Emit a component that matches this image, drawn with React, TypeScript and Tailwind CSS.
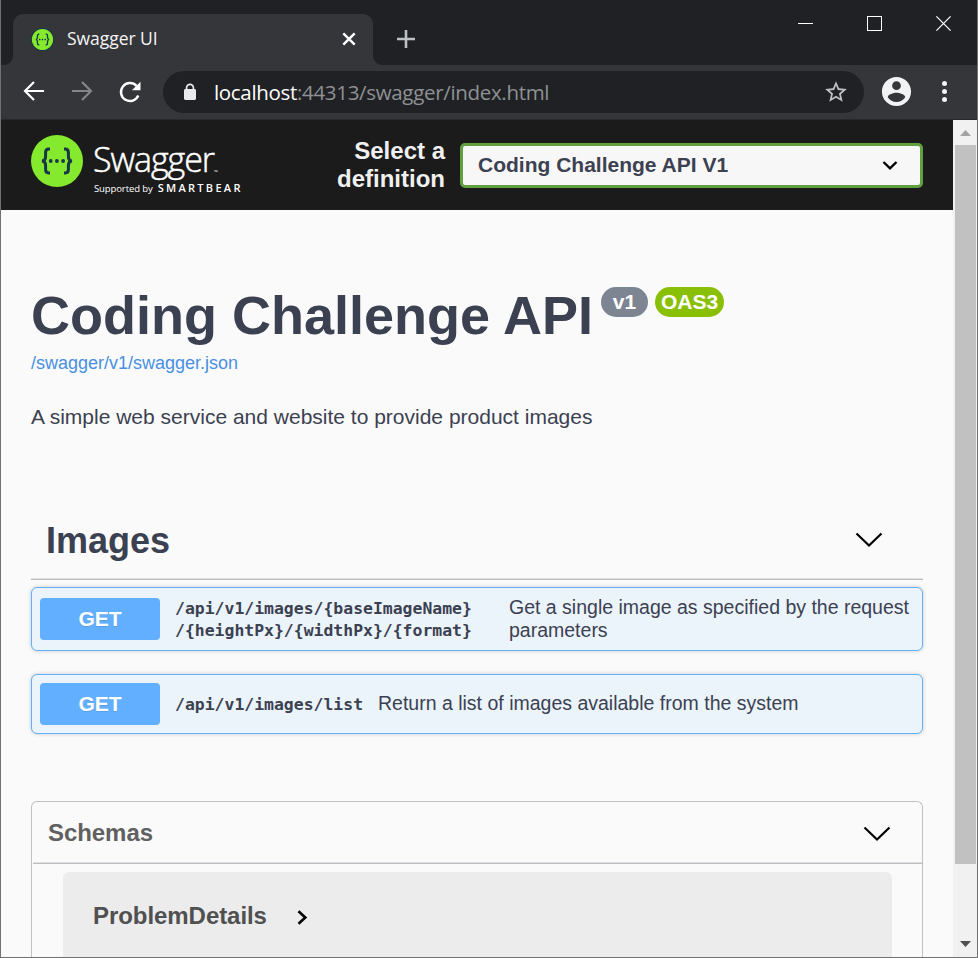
import React from "react";

const ui = "font-['Open_Sans','Noto_Sans',sans-serif]";
const sans = "font-['Liberation_Sans',Arial,sans-serif]";

function SwaggerMark({ className, dark }: { className: string; dark?: boolean }) {
  return (
    <svg className={className} viewBox="0 0 52 52" fill="none">
      <circle cx="26" cy="26" r="26" fill={dark ? "#173647" : "#85ea2d"} />
      {dark && <circle cx="26" cy="26" r="24" fill="#85ea2d" />}
      <path
        d="M19 14h-1.200c-2.400 0-3.200 1.300-3.200 3.400v4.200c0 2.500-.9 4.200-3.600 4.400 2.700.2 3.600 1.900 3.600 4.400v4.200c0 2.100.8 3.400 3.200 3.400H19M33 14h1.200c2.400 0 3.200 1.300 3.200 3.400v4.200c0 2.500.9 4.200 3.600 4.400-2.700.2-3.600 1.900-3.600 4.400v4.200c0 2.100-.8 3.400-3.200 3.400H33"
        stroke="#173647"
        strokeWidth="3"
      />
      <g fill="#173647">
        <circle cx="19.700" cy="26" r="1.900" />
        <circle cx="25.900" cy="26" r="1.900" />
        <circle cx="32.100" cy="26" r="1.900" />
      </g>
    </svg>
  );
}

function Chevron() {
  return (
    <svg className="h-[16px] w-[28px]" viewBox="0 0 28 16" fill="none">
      <path d="M1.500 1.500 14 13.500 26.500 1.500" stroke="#000" strokeWidth="2.200" />
    </svg>
  );
}

function TitleBar() {
  return (
    <div className="flex h-[65px] items-end bg-[#202124]">
      <div className="flex h-[51px] w-3 shrink-0 items-end bg-[#35363a]">
        <div className="h-full w-full rounded-br-[9px] bg-[#202124]" />
      </div>
      <div className="flex h-[51px] w-[360px] shrink-0 items-center rounded-t-[10px] bg-[#35363a] pb-px pl-[18px] pr-[17px]">
        <SwaggerMark className="h-[23px] w-[23px]" dark />
        <span className="mb-px ml-[13px] flex-1 text-[17.500px] tracking-[-0.05px] text-[#f4f4f5]">Swagger UI</span>
        <svg className="h-[14px] w-[14px]" viewBox="0 0 14 14" stroke="#fff" strokeWidth="2.400">
          <path d="m1.300 1.300 11.400 11.400m0-11.400L1.300 12.700" />
        </svg>
      </div>
      <div className="h-[51px] w-3 shrink-0 bg-[#35363a]">
        <div className="h-full w-full rounded-bl-[9px] bg-[#202124]" />
      </div>
      <svg className="mb-[17px] ml-[12px] h-[18px] w-[18px]" viewBox="0 0 18 18" stroke="#bdc1c6" strokeWidth="2.600">
        <path d="M9 0v18M0 9h18" />
      </svg>
      <div className="mb-[34px] ml-auto mr-[26px] flex items-center gap-[54px]">
        <div className="h-px w-[15px] bg-white" />
        <div className="h-[15px] w-[15px] border border-white" />
        <svg className="h-[15px] w-[15px]" viewBox="0 0 15 15" stroke="#fff" strokeWidth="1.200">
          <path d="m.4.4 14.200 14.200m0-14.200L.4 14.600" />
        </svg>
      </div>
    </div>
  );
}

function AddressBar() {
  return (
    <div className="flex h-[55px] items-center border-b border-[#29292c] bg-[#35363a] pl-[22px]">
      <svg className="mb-[2px] h-[22px] w-[22px]" viewBox="0 0 22 22" fill="none" stroke="#fff" strokeWidth="2.200">
        <path d="M21 11H2.500M11 2l-9 9 9 9" />
      </svg>
      <svg className="mb-[2px] ml-[26px] h-[22px] w-[22px]" viewBox="0 0 22 22" fill="none" stroke="#85868a" strokeWidth="2.200">
        <path d="M1 11h18.500M11 2l9 9-9 9" />
      </svg>
      <svg className="mb-[1px] ml-[25px] h-[24px] w-[24px]" viewBox="0 0 24 24" fill="none">
        <path d="M20.300 15.500a9 9 0 1 1-1.800-9.700" stroke="#fff" strokeWidth="2.400" />
        <path d="M22.500 1.700v8.600h-8.600z" fill="#fff" />
      </svg>
      <div className="ml-[21px] flex h-[42px] w-[701px] items-center rounded-full bg-[#202124] pl-[21px] pr-[15px]">
        <svg className="h-[18px] w-[12px]" viewBox="0 0 12 18">
          <path d="M2.600 7V4.800a3.400 3.400 0 0 1 6.800 0V7" fill="none" stroke="#e8eaed" strokeWidth="1.700" />
          <rect y="6" width="12" height="11" rx="1.400" fill="#e8eaed" />
        </svg>
        <div className="ml-[18px] flex-1 whitespace-nowrap text-[20.500px] tracking-[-0.320px] text-[#8e9195]">
          <span className="text-white">localhost</span>:44313/swagger/index.html
        </div>
        <svg className="h-[26px] w-[26px]" viewBox="0 0 24 24" fill="#c0c1c3">
          <path d="m22 9.240-7.190-.620L12 2 9.190 8.630 2 9.240l5.460 4.730L5.820 21 12 17.270 18.180 21l-1.630-7.030L22 9.240zM12 15.400l-3.760 2.270 1-4.280-3.320-2.880 4.380-.380L12 6.100l1.710 4.040 4.380.380-3.320 2.880 1 4.280L12 15.400z" />
        </svg>
      </div>
      <svg className="mb-[2px] ml-[15px] h-[35px] w-[35px]" viewBox="0 0 24 24" fill="#f1f3f4">
        <path d="M12 2C6.480 2 2 6.480 2 12s4.480 10 10 10 10-4.480 10-10S17.520 2 12 2zm0 3a3 3 0 1 1 0 6 3 3 0 0 1 0-6zm0 14.200a7.200 7.200 0 0 1-6-3.220c.030-1.990 4-3.080 6-3.080 1.990 0 5.970 1.090 6 3.080a7.200 7.200 0 0 1-6 3.220z" />
      </svg>
      <div className="mb-[2px] ml-[28px] flex flex-col gap-[3px]">
        <i className="h-[5px] w-[5px] rounded-full bg-[#f1f3f4]" />
        <i className="h-[5px] w-[5px] rounded-full bg-[#f1f3f4]" />
        <i className="h-[5px] w-[5px] rounded-full bg-[#f1f3f4]" />
      </div>
    </div>
  );
}

function TopBar() {
  return (
    <div className="flex h-[90px] bg-[#1b1b1b] px-[30px] text-white">
      <SwaggerMark className="mt-[15px] h-[52px] w-[52px] shrink-0" />
      <div className={`ml-[10px] w-[160px] shrink-0 pt-[19px] ${ui}`}>
        <div className="flex h-[40px] items-end leading-[40px]">
          <span className="text-[34px] font-light tracking-[-1.050px] [-webkit-text-stroke:0.5px_white]">Swagger</span>
          <span className="h-[27px] text-[5px] leading-[40px]">™</span>
        </div>
        <div className="flex h-[18px] items-center whitespace-nowrap leading-[16px]">
          <span className="ml-px mt-px text-[9.500px] tracking-[-0.100px]">Supported by</span>
          <span className="ml-[5px] text-[11px] font-semibold tracking-[2.300px]">SMARTBEAR</span>
        </div>
      </div>
      <div className="ml-auto w-[120px] pt-[17px] text-right text-[24px] font-bold leading-[28px] text-[#f0f0f0]">
        Select a definition
      </div>
      <div className="ml-[15px] mt-[23px] flex h-[45px] w-[463px] items-center justify-between rounded-[5px] border-[3px] border-[#62a03f] bg-[#f7f7f7] pl-[15px] pr-[22px]">
        <span className="mb-[2px] text-[21px] font-bold text-[#3b4151]">Coding Challenge API V1</span>
        <svg className="h-[9px] w-[16px]" viewBox="0 0 16 9" fill="none" stroke="#000" strokeWidth="2.400">
          <path d="m1.500 1 6.500 6.300L14.500 1" />
        </svg>
      </div>
    </div>
  );
}

function Info() {
  return (
    <div className="h-[286px] pt-[75px] text-[#3b4151]">
      <div className="flex h-[63px]">
        <h1 className="whitespace-nowrap text-[54px] font-bold leading-[60px]">Coding Challenge API</h1>
        <div className="ml-auto mr-[199px] mt-[2px] flex gap-[7px] text-[21px] font-bold leading-[30px] text-white">
          <span className="h-[30px] w-[47px] rounded-full bg-[#7d8492] text-center">v1</span>
          <span className="h-[30px] w-[69px] rounded-full bg-[#89bf04] text-center">OAS3</span>
        </div>
      </div>
      <div className="mt-[5px] h-[20px] text-[18px] leading-[20px] text-[#4990e2]">/swagger/v1/swagger.json</div>
      <p className="mt-[32px] text-[21px] leading-[24px]">A simple web service and website to provide product images</p>
    </div>
  );
}

function Operation({ height, path, summary, pathWidth }: { height: string; path: string[]; summary: string[]; pathWidth: string }) {
  return (
    <div className={`${height} flex items-center rounded-[6px] border border-[#61affe] bg-[#ebf3fb] pl-[8px] shadow-[0_0_4px_rgba(0,0,0,0.19)]`}>
      <div className="h-[42px] w-[120px] shrink-0 rounded-[4px] bg-[#61affe] text-center text-[21px] font-bold leading-[42px] text-white [text-shadow:0_1px_0_rgba(0,0,0,0.1)]">
        GET
      </div>
      <div className={`${pathWidth} ml-[15px] shrink-0 whitespace-nowrap pt-[2px] font-['DejaVu_Sans_Mono',monospace] text-[16.440px] font-bold leading-[22px]`}>
        {path.map((line) => (
          <div key={line}>{line}</div>
        ))}
      </div>
      <div className="mb-px whitespace-nowrap text-[19.500px] leading-[23px]">
        {summary.map((line) => (
          <div key={line}>{line}</div>
        ))}
      </div>
    </div>
  );
}

function Operations() {
  return (
    <section className="text-[#3b4151]">
      <div className="flex h-[84px] items-center justify-between border-b border-[#bdbec2] pb-px pl-[15px] pr-[40px] pt-[7px] shadow-[inset_0_-1px_0_#dedfe1]">
        <h2 className="text-[36px] font-bold">Images</h2>
        <div className="mb-px">
          <Chevron />
        </div>
      </div>
      <div className="mt-[7px] flex flex-col gap-[23px]">
        <Operation
          height="h-[64px]"
          path={["/api/v1/images/{baseImageName}", "/{heightPx}/{widthPx}/{format}"]}
          summary={["Get a single image as specified by the request", "parameters"]}
          pathWidth="w-[334px]"
        />
        <Operation
          height="h-[60px]"
          path={["/api/v1/images/list"]}
          summary={["Return a list of images available from the system"]}
          pathWidth="w-[203px]"
        />
      </div>
    </section>
  );
}

function Schemas() {
  return (
    <section className="mt-[67px] h-[170px] rounded-t-[6px] border border-b-0 border-[#bfc0c4]">
      <div className="ml-px flex h-[62px] items-center justify-between border-b border-[#bdbec2] pb-px pl-[15px] pr-[31px] pt-[3px] shadow-[inset_0_-1px_0_#dedfe1]">
        <h3 className="mb-[2px] text-[24px] font-bold tracking-[-0.060px] text-[#606060]">Schemas</h3>
        <Chevron />
      </div>
      <div className="ml-[31px] mr-[30px] mt-[8px] flex h-[87px] items-center rounded-t-[6px] bg-[#ececec] pl-[30px]">
        <span className="text-[24px] font-bold tracking-[-0.060px] text-[#505050]">ProblemDetails</span>
        <svg className="ml-[30px] mt-[4px] h-[15px] w-[11px]" viewBox="0 0 11 15" fill="none" stroke="#000" strokeWidth="2.600">
          <path d="m1.500 1.200 6.800 6.300-6.800 6.300" />
        </svg>
      </div>
    </section>
  );
}

function Scrollbar() {
  return (
    <div className="flex w-6 shrink-0 flex-col items-center bg-[#f1f1f1]">
      <svg className="mt-[10px] h-[6px] w-[11px]" viewBox="0 0 11 6">
        <path d="M0 6 5.500 0 11 6z" fill="#a3a3a3" />
      </svg>
      <div className="mt-[9px] h-[719px] w-[21px] bg-[#c1c1c1]" />
      <svg className="mb-[10px] mt-auto h-[6px] w-[11px]" viewBox="0 0 11 6">
        <path d="M0 0 5.500 6 11 0z" fill="#505050" />
      </svg>
    </div>
  );
}

export default function App() {
  return (
    <div className={`h-[958px] w-[978px] overflow-hidden border-x border-b border-[#717171] bg-[#fafafa] ${sans}`}>
      <header className={ui}>
        <TitleBar />
        <AddressBar />
      </header>
      <div className="flex h-[837px] overflow-hidden">
        <main className="w-[952px] shrink-0">
          <TopBar />
          <div className="px-[30px]">
            <Info />
            <Operations />
            <Schemas />
          </div>
        </main>
        <Scrollbar />
      </div>
    </div>
  );
}
